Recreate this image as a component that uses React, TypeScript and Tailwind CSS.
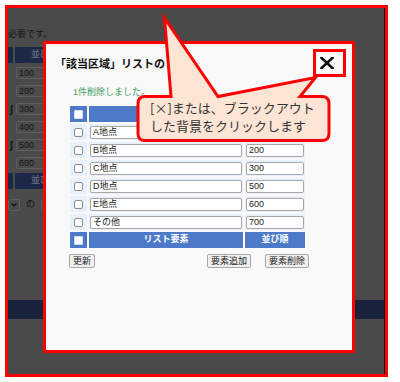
import React from "react";

const rows = [
  { name: "A地点", order: "100" },
  { name: "B地点", order: "200" },
  { name: "C地点", order: "300" },
  { name: "D地点", order: "500" },
  { name: "E地点", order: "600" },
  { name: "その他", order: "700" },
];

const bgOrders = ["100", "200", "300", "400", "500", "600"];

function Check({ onBlue }: { onBlue?: boolean }) {
  return (
    <span
      className={
        onBlue
          ? "block w-[9px] h-[9px] bg-white border border-[#d8dfe8] rounded-[1px]"
          : "block w-[9px] h-[9px] bg-white border border-[#8e8e8e] rounded-[2px]"
      }
    />
  );
}

function Modal() {
  return (
    <div className="absolute left-[35px] top-[33px] w-[312px] h-[312px] border-[3px] border-[#ff0000] bg-[#f9f9f9]">
      {/* close */}
      <div className="absolute left-[273px] top-[12px] w-[15px] h-[13px] flex items-center justify-center">
        <svg width="14" height="12" viewBox="0 0 14 12">
          <path d="M1.5 0.8 L12.5 11.2 M12.5 0.8 L1.5 11.2" stroke="#111" strokeWidth="2.6" strokeLinecap="square" />
        </svg>
      </div>

      <h2 className="pt-[12px] pl-[9px] h-[28px] text-[11px] leading-[16px] font-bold text-[#111]">
        「該当区域」リストの
      </h2>

      <div className="pl-[24px] pr-[44px]">
        <p className="mt-[14px] ml-[3px] h-[12px] text-[9px] leading-[12px] text-[#3b9a5c]">
          1件削除しました。
        </p>

        <div className="mt-[8px] grid grid-cols-[17px_154px_60px] gap-[2px] auto-rows-[16px]">
          <div className="bg-[#4c7ac9] flex items-center justify-center">
            <Check onBlue />
          </div>
          <div className="bg-[#4c7ac9] flex items-center justify-center text-[9px] font-bold text-white">
            リスト要素
          </div>
          <div className="bg-[#4c7ac9] flex items-center justify-center text-[9px] font-bold text-white">
            並び順
          </div>

          {rows.map((r) => (
            <React.Fragment key={r.name}>
              <div className="bg-[#e8f0fb] flex items-center justify-center">
                <Check />
              </div>
              <div className="bg-[#e8f0fb] flex items-center px-[1px]">
                <div className="w-full h-[13px] bg-white border border-[#a7a7a7] rounded-[2px] pl-[2px] text-[9px] leading-[11px] text-[#222]">
                  {r.name}
                </div>
              </div>
              <div className="bg-[#e8f0fb] flex items-center px-[1px]">
                <div className="w-full h-[13px] bg-white border border-[#a7a7a7] rounded-[2px] pl-[2px] text-[9px] leading-[11px] text-[#222]">
                  {r.order}
                </div>
              </div>
            </React.Fragment>
          ))}

          <div className="bg-[#4c7ac9] flex items-center justify-center">
            <Check onBlue />
          </div>
          <div className="bg-[#4c7ac9] flex items-center justify-center text-[9px] font-bold text-white">
            リスト要素
          </div>
          <div className="bg-[#4c7ac9] flex items-center justify-center text-[9px] font-bold text-white">
            並び順
          </div>
        </div>

        <div className="mt-[6px] flex items-center justify-between -ml-[1px] -mr-[1px]">
          <button className="h-[14px] px-[3px] bg-[#efefef] border border-[#a9a9a9] rounded-[2px] text-[9px] leading-[12px] text-[#222]">
            更新
          </button>
          <div className="flex gap-[14px]">
            <button className="h-[14px] px-[3px] bg-[#efefef] border border-[#a9a9a9] rounded-[2px] text-[9px] leading-[12px] text-[#222]">
              要素追加
            </button>
            <button className="h-[14px] px-[3px] bg-[#efefef] border border-[#a9a9a9] rounded-[2px] text-[9px] leading-[12px] text-[#222]">
              要素削除
            </button>
          </div>
        </div>
      </div>
    </div>
  );
}

function Callout() {
  return (
    <>
      <svg className="absolute inset-0 pointer-events-none" width="400" height="382" viewBox="0 0 400 382">
        <rect x="314.5" y="50.5" width="30" height="25" fill="none" stroke="#ff0000" strokeWidth="3" />
        <path
          d="M145 96.5 L171 96.5 L164.5 18 L218 96.5 L315.5 77.5 L300 96.5 L322 96.5 Q329 96.5 329 103.5 L329 133.5 Q329 140.5 322 140.5 L145 140.5 Q138 140.5 138 133.5 L138 103.5 Q138 96.5 145 96.5 Z"
          fill="#fce5d5"
          stroke="#ff0000"
          strokeWidth="3"
          strokeLinejoin="miter"
        />
      </svg>
      <div className="absolute left-[150px] top-[99px] text-[13px] leading-[18px] text-[#333] font-[family-name:'Noto_Sans_CJK_JP',sans-serif]">
        <div>[×]または、ブラックアウト</div>
        <div>した背景をクリックします</div>
      </div>
    </>
  );
}

function BackgroundPage() {
  return (
    <div className="text-[9px] text-[#141414]">
      <p className="pt-[20px] h-[32px] leading-[12px]">必要です。</p>
      <div className="mt-[7px] grid grid-cols-[5px_60px] gap-[2px] auto-rows-[16px]">
        <div className="bg-[#1b2848]" />
        <div className="bg-[#1b2848] flex items-center pl-[16px] font-bold text-[#5d6476]">並び順</div>
        {bgOrders.map((o, i) => (
          <React.Fragment key={o}>
            <div className="flex items-center justify-end text-[10px] font-bold text-[#111] overflow-hidden">
              {i === 2 || i === 4 ? "ʃ" : ""}
            </div>
            <div className="flex items-center pl-[1px]">
              <div className="w-[29px] h-[12px] border border-[#5e5e5e] rounded-[2px] bg-[#4c4c4c] pl-[2px] leading-[10px]">
                {o}
              </div>
            </div>
          </React.Fragment>
        ))}
        <div className="bg-[#1b2848]" />
        <div className="bg-[#1b2848] flex items-center pl-[16px] font-bold text-[#5d6476]">並び順</div>
      </div>
      <div className="mt-[9px] flex items-center gap-[6px]">
        <div className="w-[12px] h-[12px] border border-[#5e5e5e] rounded-[2px] flex items-center justify-center">
          <svg width="6" height="4" viewBox="0 0 6 4">
            <path d="M0.5 0.5 L3 3 L5.5 0.5" stroke="#111" strokeWidth="1.2" fill="none" />
          </svg>
        </div>
        <span>の</span>
        <div className="w-[20px] h-[12px] border border-[#5e5e5e] rounded-[2px]" />
      </div>
      <div className="mt-[88px] h-[19px] bg-[#19233b]" />
    </div>
  );
}

export default function App() {
  return (
    <div className="relative w-[400px] h-[382px] bg-white overflow-hidden font-[family-name:'Liberation_Sans','Noto_Sans_CJK_JP',sans-serif]">
      <div className="pl-[5px] pt-[5px]">
        <div className="w-[383px] h-[372px] border-[3px] border-[#ff0000]">
          <div className="relative w-full h-full overflow-hidden bg-[#4a4a4a] border-r border-black">
            <BackgroundPage />
            <Modal />
          </div>
        </div>
      </div>
      <Callout />
    </div>
  );
}
